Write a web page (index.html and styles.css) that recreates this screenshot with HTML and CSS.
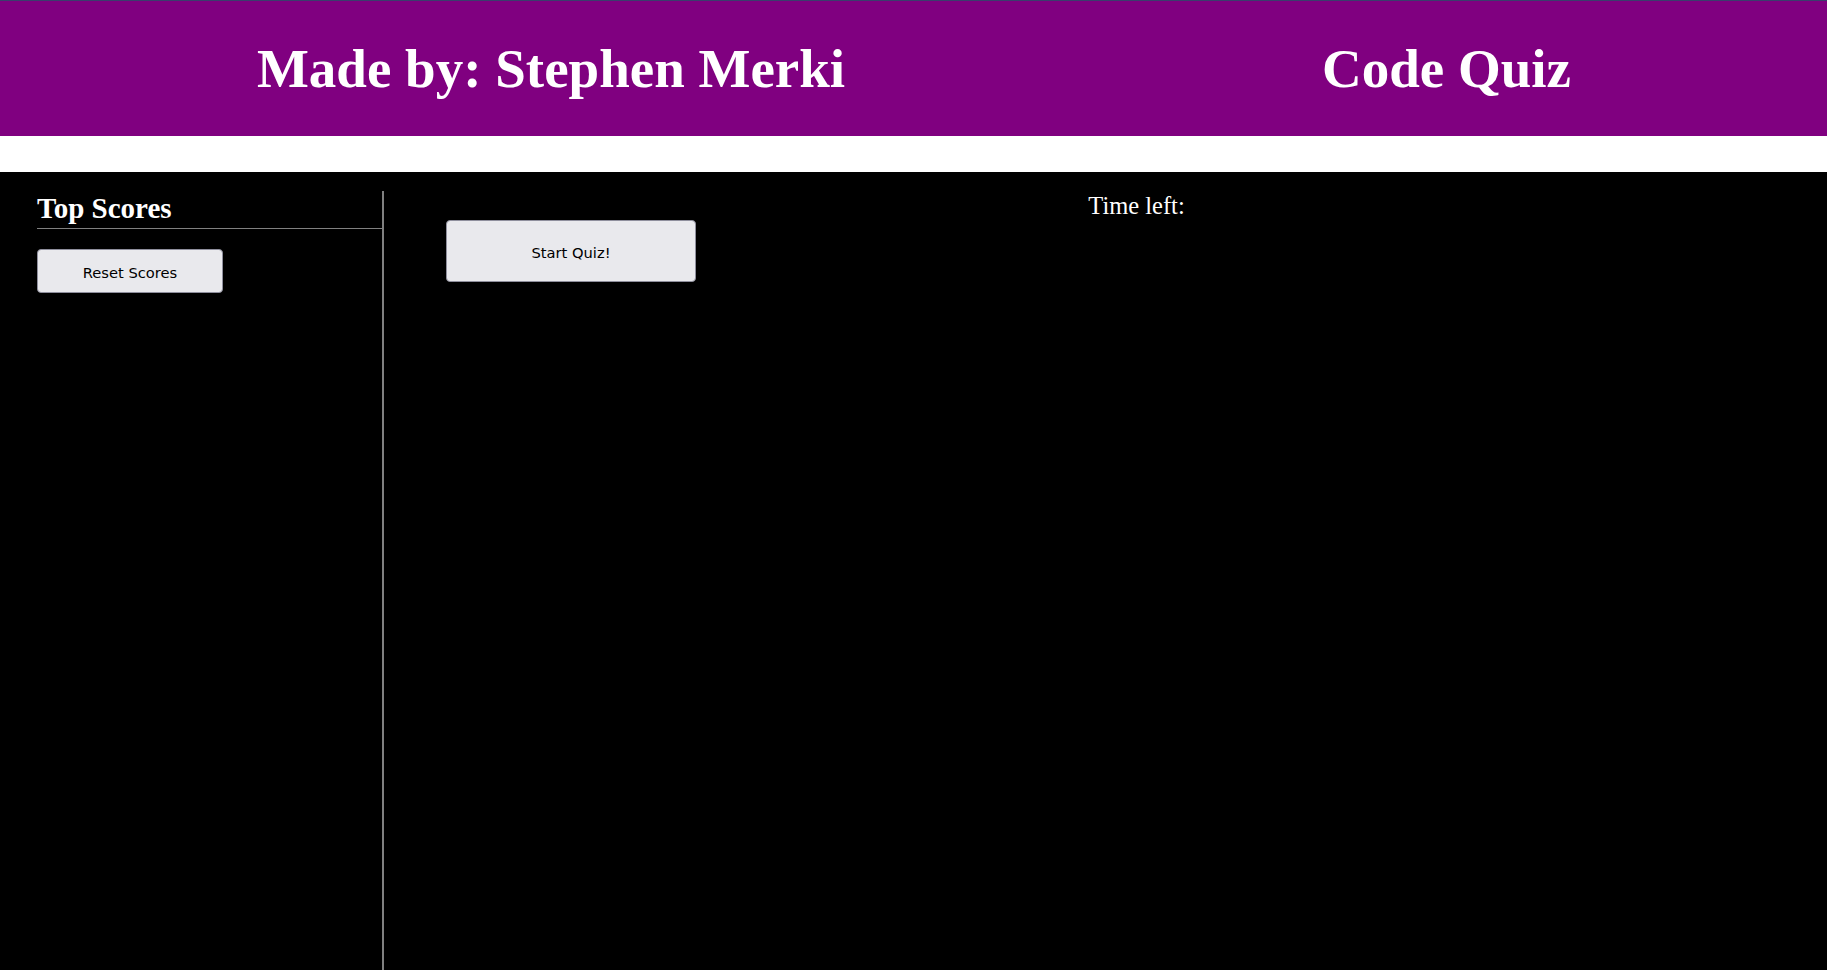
FILE: index.html
```html
<!DOCTYPE html>
<html lang="en">
<head>
<meta charset="utf-8">
<title>Code Quiz</title>
<link rel="stylesheet" href="styles.css">
</head>
<body>
<header class="site-header">
  <div class="header-col header-left"><h1 class="header-title">Made by: Stephen Merki</h1></div>
  <div class="header-col"><h1 class="header-title">Code Quiz</h1></div>
</header>
<main class="page">
  <aside class="scores">
    <h2 class="scores-title">Top Scores</h2>
    <button class="btn btn-reset" type="button">Reset Scores</button>
  </aside>
  <section class="quiz">
    <div class="timer">Time left: <span class="timer-value"></span></div>
    <button class="btn btn-start" type="button">Start Quiz!</button>
  </section>
</main>
</body>
</html>
```
FILE: styles.css
```css
html, body {
  margin: 0;
  padding: 0;
}
body {
  background: #ffffff;
  font-family: "Liberation Serif", "Times New Roman", serif;
}
.site-header {
  display: grid;
  grid-template-columns: 1066px 1fr;
  height: 135px;
  background: #800080;
  border-top: 1px solid #3a3d6c;
  margin-bottom: 36px;
}
.header-col {
  display: flex;
  align-items: center;
  justify-content: center;
}
.header-left {
  padding-left: 36px;
}
.header-title {
  margin: 0;
  color: #ffffff;
  font-size: 55px;
  font-weight: bold;
  line-height: 1;
}
.page {
  display: grid;
  grid-template-columns: 384px 1fr;
  height: 798px;
  padding-top: 19px;
  box-sizing: border-box;
  background: #000000;
  color: #ffffff;
}
.scores {
  box-sizing: border-box;
  padding-left: 37px;
  border-right: 2px solid #808080;
}
.scores-title {
  margin: 2px 0 0;
  padding-bottom: 4px;
  font-size: 29px;
  line-height: 31px;
  font-weight: bold;
  border-bottom: 1px solid #808080;
}
.btn {
  display: block;
  box-sizing: border-box;
  background: #e9e9ed;
  color: #000000;
  border: 1px solid #8f8f9d;
  border-radius: 4px;
  font-family: "DejaVu Sans", Verdana, sans-serif;
  font-size: 14.7px;
  padding: 2px 0 0;
  cursor: pointer;
}
.btn-reset {
  margin-top: 20px;
  width: 186px;
  height: 44px;
}
.quiz {
  padding-top: 1px;
  padding-left: 62px;
}
.timer {
  text-align: center;
  font-size: 24.5px;
  line-height: 27px;
}
.btn-start {
  margin-top: 1px;
  width: 250px;
  height: 62px;
}
```
